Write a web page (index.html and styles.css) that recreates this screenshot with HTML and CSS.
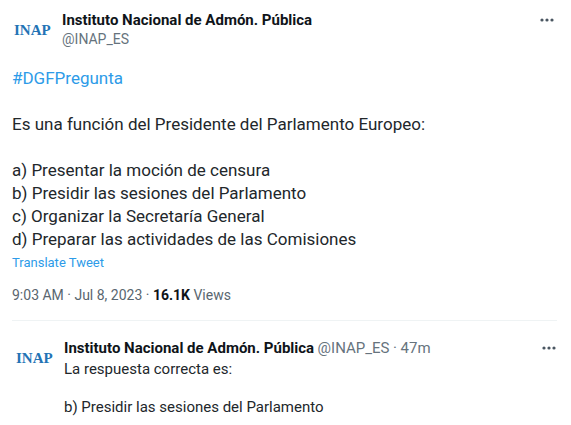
FILE: index.html
```html
<!DOCTYPE html>
<html lang="es">
<head>
<meta charset="utf-8">
<meta name="viewport" content="width=device-width, initial-scale=1">
<title>Instituto Nacional de Admón. Pública</title>
<link rel="stylesheet" href="styles.css">
</head>
<body>
<main class="thread">
  <article class="tweet">
    <header class="tweet-header">
      <div class="avatar">INAP</div>
      <div class="author">
        <a class="name" href="#">Instituto Nacional de Admón. Pública</a>
        <a class="handle" href="#">@INAP_ES</a>
      </div>
      <button class="more" type="button" aria-label="More">
        <svg viewBox="0 0 16 6" width="16" height="6" aria-hidden="true"><circle cx="3" cy="3" r="1.6"/><circle cx="8" cy="3" r="1.6"/><circle cx="13" cy="3" r="1.6"/></svg>
      </button>
    </header>
    <div class="tweet-text">
      <p><a class="link" href="#">#DGFPregunta</a></p>
      <p>Es una función del Presidente del Parlamento Europeo:</p>
      <p>a) Presentar la moción de censura<br>b) Presidir las sesiones del Parlamento<br>c) Organizar la Secretaría General<br>d) Preparar las actividades de las Comisiones</p>
    </div>
    <button class="translate" type="button">Translate Tweet</button>
    <p class="meta">9:03 AM · Jul 8, 2023 · <strong>16.1K</strong> Views</p>
  </article>
  <article class="reply">
    <div class="avatar">INAP</div>
    <div class="reply-body">
      <div class="byline"><a class="name" href="#">Instituto Nacional de Admón. Pública</a> <a class="handle" href="#">@INAP_ES</a> <span class="handle">· 47m</span></div>
      <p>La respuesta correcta es:</p>
      <p class="answer">b) Presidir las sesiones del Parlamento</p>
    </div>
    <button class="more" type="button" aria-label="More">
      <svg viewBox="0 0 16 6" width="16" height="6" aria-hidden="true"><circle cx="3" cy="3" r="1.6"/><circle cx="8" cy="3" r="1.6"/><circle cx="13" cy="3" r="1.6"/></svg>
    </button>
  </article>
</main>
</body>
</html>
```
FILE: styles.css
```css
* { box-sizing: border-box; }
body {
  margin: 0;
  background: #fff;
  color: #22272b;
  font: 14px/19px Roboto, "Liberation Sans", sans-serif;
}
p { margin: 0; }
a { color: inherit; text-decoration: none; }
button {
  padding: 0;
  border: 0;
  background: none;
  font: inherit;
  cursor: pointer;
}
.thread { padding: 11px 14px 8px 12px; }
.tweet { border-bottom: 1px solid #eff3f4; padding-bottom: 15px; }
.tweet-header, .reply { display: flex; align-items: flex-start; }
.avatar {
  flex: none;
  width: 50px;
  padding-top: 10px;
  padding-left: 2px;
  color: #2373b5;
  font: bold 15px/18px "Liberation Serif", serif;
}
.author { display: flex; flex: 1; flex-direction: column; }
.name { color: #0f1419; font-size: 15px; font-weight: 700; }
.handle { color: #66737d; }
.byline .handle { font-size: 15px; }
.more { display: flex; padding: 6px 2px; }
.reply .more { padding: 6px 0; }
.more svg { fill: #4a5661; }
.tweet-text {
  display: grid;
  gap: 23px;
  padding-top: 18px;
  font-size: 17px;
  line-height: 23px;
}
.link, .translate { color: #2d9be8; }
.translate { display: block; padding-top: 3px; font-size: 13px; line-height: 18px; }
.meta { padding-top: 14px; color: #59666f; font-size: 14px; }
.meta strong { color: #0f1419; }
.reply { padding-top: 18px; }
.reply .avatar { width: 52px; padding-left: 4px; }
.reply-body { flex: 1; min-width: 0; }
.reply-body p { font-size: 15px; line-height: 22px; }
.reply-body .answer { margin-top: 16px; }
```
